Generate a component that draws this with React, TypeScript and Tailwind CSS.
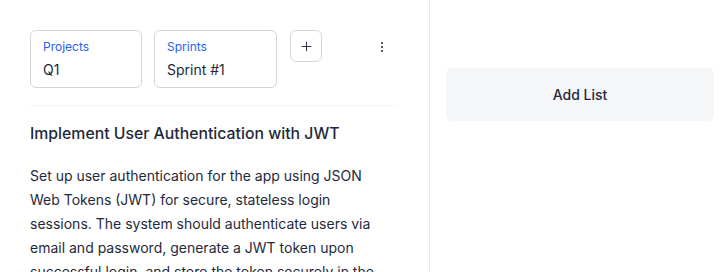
import { Plus } from "lucide-react";

function Picker({ label, value, width }: { label: string; value: string; width: string }) {
  return (
    <div className={`${width} h-[58px] rounded-md border border-gray-300 px-3 pt-2`}>
      <div className="text-xs leading-4 text-[#2563eb]">{label}</div>
      <div className="mt-[5px] text-sm leading-5 text-[#1e293b]">{value}</div>
    </div>
  );
}

function Kebab() {
  return (
    <button className="mr-[11px] mt-[9px] flex h-4 w-2 flex-col items-center justify-center gap-[2px]">
      <span className="h-[2px] w-[2px] rounded-full bg-[#1e293b]" />
      <span className="h-[2px] w-[2px] rounded-full bg-[#1e293b]" />
      <span className="h-[2px] w-[2px] rounded-full bg-[#1e293b]" />
    </button>
  );
}

export default function App() {
  return (
    <div className="flex h-[272px] w-[724px] overflow-hidden bg-white font-['Inter',sans-serif]">
      <div className="h-full w-[430px] shrink-0 border-r border-gray-200 pl-[30px] pr-8 pt-[30px]">
        <div className="flex items-start">
          <Picker label="Projects" value="Q1" width="w-[112px]" />
          <div className="ml-3">
            <Picker label="Sprints" value="Sprint #1" width="w-[123px]" />
          </div>
          <button className="ml-[13px] flex h-8 w-8 items-center justify-center rounded-md border border-gray-300 text-[#1e293b]">
            <Plus size={15} strokeWidth={1.5} />
          </button>
          <div className="ml-auto">
            <Kebab />
          </div>
        </div>
        <div className="mt-[17px] h-px bg-gray-100" />
        <h2 className="mt-4 text-[15.8px] font-medium leading-6 text-[#1e293b]">
          Implement User Authentication with JWT
        </h2>
        <p className="mt-[18px] w-[352px] text-sm leading-6 text-[#1e293b]">
          Set up user authentication for the app using JSON Web Tokens (JWT) for secure, stateless login
          sessions. The system should authenticate users via email and password, generate a JWT token upon
          successful login, and store the token securely in the client.
        </p>
      </div>
      <div className="flex-1 pl-4 pt-[68px]">
        <button className="flex h-[53px] w-[268px] items-center justify-center rounded-md bg-[#f5f6f8] text-sm font-medium text-[#1e293b]">
          Add List
        </button>
      </div>
    </div>
  );
}
